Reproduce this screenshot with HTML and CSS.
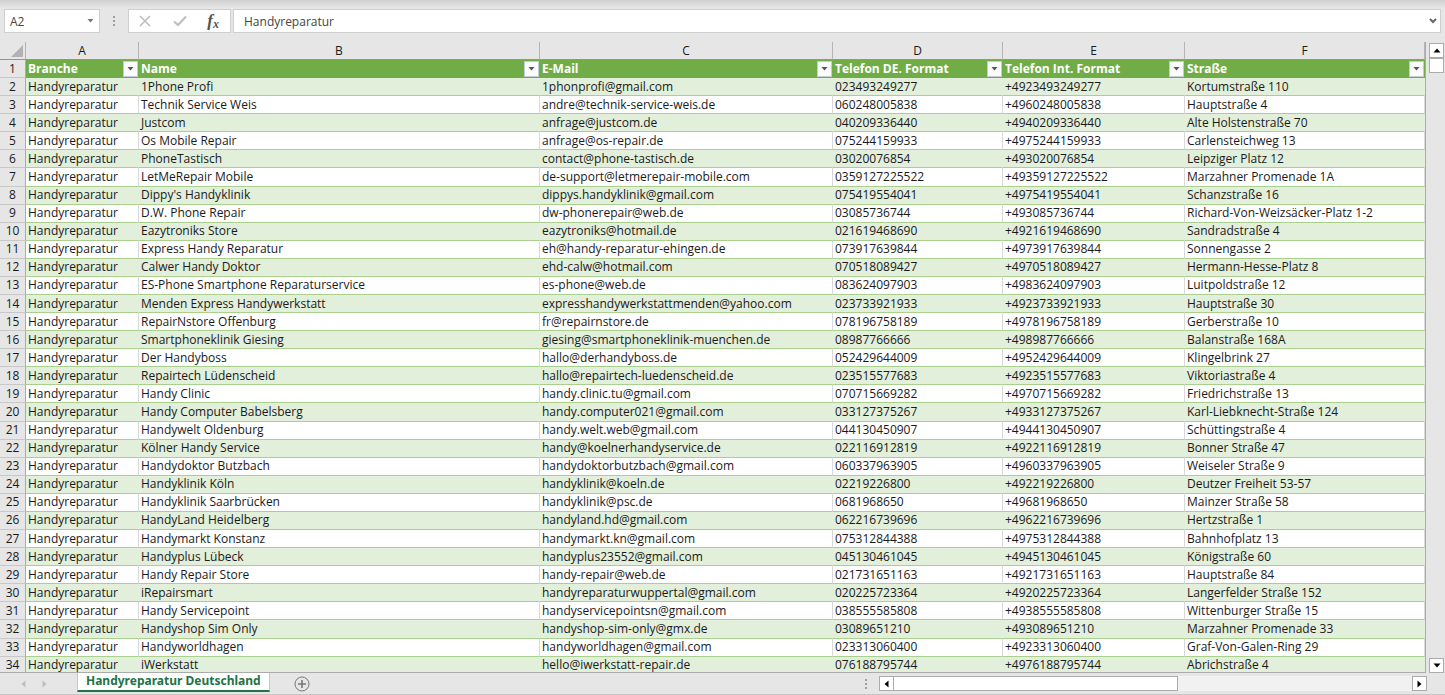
FILE: index.html
```html
<!DOCTYPE html>
<html lang="de">
<head>
<meta charset="utf-8">
<title>Handyreparatur Deutschland</title>
<link rel="stylesheet" href="styles.css">
</head>
<body>
<div class="app">
  <header class="formula-bar">
    <div class="name-box">
      <input class="name-input" aria-label="Namenfeld" value="A2">
      <button class="plain" aria-label="Namen anzeigen"><svg width="7" height="4" viewBox="0 0 7 4"><path d="M0.5 0h6L3.5 3.6z" fill="#777"/></svg></button>
    </div>
    <svg class="grip" width="4" height="12" viewBox="0 0 4 12" fill="#a0a0a0"><path d="M1 1h2v2H1zM1 5h2v2H1zM1 9h2v2H1z"/></svg>
    <div class="tools">
      <button class="plain" aria-label="Abbrechen"><svg width="14" height="12" viewBox="0 0 14 12" fill="none" stroke="#bcbcbc" stroke-width="1.5"><path d="M2 1l10 10M12 1L2 11"/></svg></button>
      <button class="plain" aria-label="Eingeben"><svg width="14" height="12" viewBox="0 0 14 12" fill="none" stroke="#c0c0c0" stroke-width="2.2"><path d="M1 6.5l4 3.5 8-8.5"/></svg></button>
      <button class="plain fx" aria-label="Funktion einfügen">f<span class="fx-x">x</span></button>
    </div>
    <div class="formula">
      <input class="formula-input" aria-label="Bearbeitungsleiste" value="Handyreparatur">
      <button class="plain" aria-label="Bearbeitungsleiste erweitern"><svg width="8" height="6" viewBox="0 0 8 6" fill="none" stroke="#666" stroke-width="2"><path d="M1 1l3 3 3-3"/></svg></button>
    </div>
  </header>
  <main class="workspace">
    <div class="grid-pane">
      <table class="sheet">
        <colgroup><col class="c-num"><col class="c-a"><col class="c-b"><col class="c-c"><col class="c-d"><col class="c-e"><col></colgroup>
        <thead>
          <tr class="letters"><th class="corner"><svg width="12" height="12" viewBox="0 0 12 12"><path d="M12 0v12H0z" fill="#b2b2b2"/></svg></th><th>A</th><th>B</th><th>C</th><th>D</th><th>E</th><th>F</th></tr>
        </thead>
        <tbody id="rows"></tbody>
      </table>
    </div>
    <div class="vscroll">
      <button class="scroll-btn" aria-label="Nach oben"><svg width="8" height="5" viewBox="0 0 8 5"><path d="M0.5 4.5L4 0.5l3.5 4z"/></svg></button>
      <div class="v-thumb"></div>
      <button class="scroll-btn v-end" aria-label="Nach unten"><svg width="8" height="5" viewBox="0 0 8 5"><path d="M0.5 0.5h7L4 4.5z"/></svg></button>
    </div>
  </main>
  <footer class="tab-bar">
    <div class="tab-nav">
      <button class="plain" aria-label="Vorheriges Blatt"><svg width="5" height="8" viewBox="0 0 5 8"><path d="M4.5 0.5v7L0.5 4z" fill="#bdbdbd"/></svg></button>
      <button class="plain" aria-label="Nächstes Blatt"><svg width="5" height="8" viewBox="0 0 5 8"><path d="M0.5 0.5v7l4-3.5z" fill="#bdbdbd"/></svg></button>
    </div>
    <button class="tab">Handyreparatur Deutschland</button>
    <button class="plain add" aria-label="Neues Blatt"><svg width="16" height="16" viewBox="0 0 16 16" fill="none" stroke="#777"><circle cx="8" cy="8" r="7"/><path d="M8 4v8M4 8h8" stroke-width="1.6"/></svg></button>
    <svg class="grip" width="4" height="12" viewBox="0 0 4 12" fill="#a0a0a0"><path d="M1 1h2v2H1zM1 5h2v2H1zM1 9h2v2H1z"/></svg>
    <div class="hscroll">
      <button class="scroll-btn" aria-label="Nach links"><svg width="5" height="8" viewBox="0 0 5 8"><path d="M4.5 0.5v7L0.5 4z"/></svg></button>
      <div class="h-thumb"></div>
      <button class="scroll-btn h-end" aria-label="Nach rechts"><svg width="5" height="8" viewBox="0 0 5 8"><path d="M0.5 0.5v7l4-3.5z"/></svg></button>
    </div>
  </footer>
</div>
<script src="sheet.js"></script>
</body>
</html>
```
FILE: styles.css
```css
* { box-sizing: border-box; }
body { margin: 0; font-family: "Open Sans", "Noto Sans", sans-serif; font-size: 12px; color: #1a1a1a; }
button, input { font: inherit; color: inherit; }
svg { display: block; flex: none; }
.app { display: flex; flex-direction: column; height: 100vh; overflow: hidden; background: #e6e6e6; }

.plain { display: flex; align-items: center; justify-content: center; border: 0; padding: 0; background: none; }
.formula-bar { display: flex; align-items: center; flex: none; height: 42px; padding: 0 4px; background: linear-gradient(#cfcfcf, #e6e6e6 8px); }
.name-box, .tools, .formula { display: flex; align-items: center; height: 24px; border: 1px solid #cfcfcf; background: #fff; }
.name-box { width: 96px; padding: 0 5px; color: #444; }
.name-input { flex: 1; min-width: 0; border: 0; padding: 0; background: none; }
.formula-bar .grip { margin: 0 12px; }
.tools { width: 103px; justify-content: space-between; padding: 0 11px 0 9px; margin-right: 2px; }
.fx { font-family: "Liberation Serif", serif; font-style: italic; font-weight: bold; font-size: 17px; line-height: 20px; color: #555; }
.fx-x { font-size: 12px; padding-top: 5px; }
.formula { flex: 1; padding: 0 3px 0 10px; color: #444; }
.formula-input { flex: 1; border: 0; padding: 0; background: none; }

.workspace { display: flex; flex: 1; min-height: 0; }
.grid-pane { flex: 1; min-width: 0; overflow: hidden; border-bottom: 1px solid #ababab; }
.sheet { width: 100%; height: calc(100% + 3px); table-layout: fixed; border-collapse: separate; border-spacing: 0; border-right: 1px solid #ababab; background: #fff; }
.c-num { width: 26px; }
.c-a { width: 113px; }
.c-b { width: 401px; }
.c-c { width: 293px; }
.c-d { width: 170px; }
.c-e { width: 182px; }
.sheet td, .sheet th { height: 18px; padding: 0 2px; line-height: 16px; font-weight: normal; text-align: left; white-space: nowrap; overflow: hidden; border-right: 1px solid #d9d9d9; border-bottom: 1px solid #a9d08e; }
.sheet .letters th { text-align: center; background: #e6e6e6; border-right-color: #b5b5b5; border-bottom-color: #8c9c84; }
.sheet .letters .corner svg { margin-left: 9px; }
.sheet .num { padding: 0; text-align: center; background: #e6e6e6; border-right-color: #ababab; border-bottom-color: #c8c8c8; }
.sheet .band td { background: #e2efda; border-right-color: #e2efda; }
.sheet .title th { padding-right: 0; font-weight: bold; color: #fff; background: #70ad47; border-color: #70ad47; }
.sheet .title .num { font-weight: normal; color: #1a1a1a; background: #e6e6e6; border-right-color: #ababab; border-bottom-color: #c8c8c8; }
.head { display: flex; align-items: center; justify-content: space-between; }
.filter { display: flex; align-items: center; justify-content: center; width: 15px; height: 16px; padding: 0; border: 1px solid #c3cbd8; background: #fbfbfd; }

.vscroll { display: flex; flex-direction: column; flex: none; width: 19px; padding: 1px 1px 0 3px; background: #e6e6e6; }
.scroll-btn { display: flex; align-items: center; justify-content: center; flex: none; width: 15px; height: 15px; padding: 0; border: 1px solid #ababab; background: #fff; }
.v-thumb { height: 15px; border: 1px solid #ababab; background: #fff; }
.v-end { margin-top: auto; }

.tab-bar { display: flex; align-items: center; flex: none; height: 22px; padding-right: 18px; border-bottom: 1px solid #c6c6c6; }
.tab-nav { display: flex; gap: 16px; width: 77px; padding-left: 21px; }
.tab { align-self: flex-start; height: 19px; padding: 0 8px 2px; border: 1px solid #c6c6c6; border-top: 0; border-bottom: 2px solid #217346; background: #fff; color: #217346; font-family: "Noto Sans", sans-serif; font-size: 12px; font-weight: bold; line-height: 15px; white-space: nowrap; }
.add { margin: 0 auto 0 24px; }
.tab-bar .grip { margin-right: 11px; }
.hscroll { display: flex; width: 548px; background: #f1f1f1; }
.h-thumb { width: 284px; border: 1px solid #ababab; border-left: 0; background: #fff; }
.h-end { margin-left: auto; }
```
FILE: sheet.js
```js
const titles = ["Branche", "Name", "E-Mail", "Telefon DE. Format", "Telefon Int. Format", "Straße"];

// Name | E-Mail | national number | street
const entries = `1Phone Profi|1phonprofi@gmail.com|023493249277|Kortumstraße 110
Technik Service Weis|andre@technik-service-weis.de|060248005838|Hauptstraße 4
Justcom|anfrage@justcom.de|040209336440|Alte Holstenstraße 70
Os Mobile Repair|anfrage@os-repair.de|075244159933|Carlensteichweg 13
PhoneTastisch|contact@phone-tastisch.de|03020076854|Leipziger Platz 12
LetMeRepair Mobile|de-support@letmerepair-mobile.com|0359127225522|Marzahner Promenade 1A
Dippy's Handyklinik|dippys.handyklinik@gmail.com|075419554041|Schanzstraße 16
D.W. Phone Repair|dw-phonerepair@web.de|03085736744|Richard-Von-Weizsäcker-Platz 1-2
Eazytroniks Store|eazytroniks@hotmail.de|021619468690|Sandradstraße 4
Express Handy Reparatur|eh@handy-reparatur-ehingen.de|073917639844|Sonnengasse 2
Calwer Handy Doktor|ehd-calw@hotmail.com|070518089427|Hermann-Hesse-Platz 8
ES-Phone Smartphone Reparaturservice|es-phone@web.de|083624097903|Luitpoldstraße 12
Menden Express Handywerkstatt|expresshandywerkstattmenden@yahoo.com|023733921933|Hauptstraße 30
RepairNstore Offenburg|fr@repairnstore.de|078196758189|Gerberstraße 10
Smartphoneklinik Giesing|giesing@smartphoneklinik-muenchen.de|08987766666|Balanstraße 168A
Der Handyboss|hallo@derhandyboss.de|052429644009|Klingelbrink 27
Repairtech Lüdenscheid|hallo@repairtech-luedenscheid.de|023515577683|Viktoriastraße 4
Handy Clinic|handy.clinic.tu@gmail.com|070715669282|Friedrichstraße 13
Handy Computer Babelsberg|handy.computer021@gmail.com|033127375267|Karl-Liebknecht-Straße 124
Handywelt Oldenburg|handy.welt.web@gmail.com|044130450907|Schüttingstraße 4
Kölner Handy Service|handy@koelnerhandyservice.de|022116912819|Bonner Straße 47
Handydoktor Butzbach|handydoktorbutzbach@gmail.com|060337963905|Weiseler Straße 9
Handyklinik Köln|handyklinik@koeln.de|02219226800|Deutzer Freiheit 53-57
Handyklinik Saarbrücken|handyklinik@psc.de|0681968650|Mainzer Straße 58
HandyLand Heidelberg|handyland.hd@gmail.com|062216739696|Hertzstraße 1
Handymarkt Konstanz|handymarkt.kn@gmail.com|075312844388|Bahnhofplatz 13
Handyplus Lübeck|handyplus23552@gmail.com|045130461045|Königstraße 60
Handy Repair Store|handy-repair@web.de|021731651163|Hauptstraße 84
iRepairsmart|handyreparaturwuppertal@gmail.com|020225723364|Langerfelder Straße 152
Handy Servicepoint|handyservicepointsn@gmail.com|038555585808|Wittenburger Straße 15
Handyshop Sim Only|handyshop-sim-only@gmx.de|03089651210|Marzahner Promenade 33
Handyworldhagen|handyworldhagen@gmail.com|023313060400|Graf-Von-Galen-Ring 29
iWerkstatt|hello@iwerkstatt-repair.de|076188795744|Abrichstraße 4`.split("\n").map(line => line.split("|"));

const arrow = '<svg width="7" height="4" viewBox="0 0 7 4"><path d="M0.5 0h6L3.5 3.5z" fill="#555"/></svg>';

const titleRow = `<tr class="title"><th class="num">1</th>${titles.map(t =>
  `<th><div class="head">${t}<button class="filter" aria-label="${t} filtern">${arrow}</button></div></th>`).join("")}</tr>`;

const dataRows = entries.map(([name, mail, phone, street], i) => {
  const cells = ["Handyreparatur", name, mail, phone, "+49" + phone.slice(1), street];
  return `<tr class="${i % 2 ? "" : "band"}"><th class="num">${i + 2}</th>${cells.map(c => `<td>${c}</td>`).join("")}</tr>`;
});

document.getElementById("rows").innerHTML = titleRow + dataRows.join("");
```
